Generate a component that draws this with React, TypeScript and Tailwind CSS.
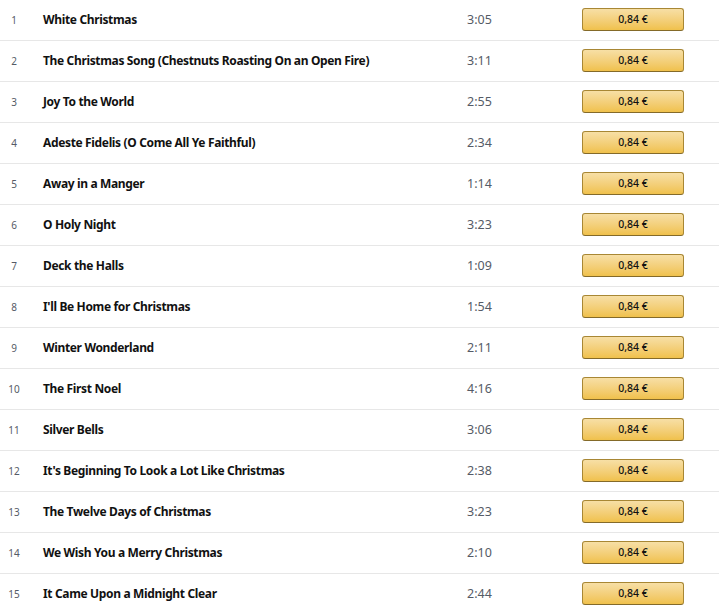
import React from "react";

const tracks: [string, string][] = [
  ["White Christmas", "3:05"],
  ["The Christmas Song (Chestnuts Roasting On an Open Fire)", "3:11"],
  ["Joy To the World", "2:55"],
  ["Adeste Fidelis (O Come All Ye Faithful)", "2:34"],
  ["Away in a Manger", "1:14"],
  ["O Holy Night", "3:23"],
  ["Deck the Halls", "1:09"],
  ["I'll Be Home for Christmas", "1:54"],
  ["Winter Wonderland", "2:11"],
  ["The First Noel", "4:16"],
  ["Silver Bells", "3:06"],
  ["It's Beginning To Look a Lot Like Christmas", "2:38"],
  ["The Twelve Days of Christmas", "3:23"],
  ["We Wish You a Merry Christmas", "2:10"],
  ["It Came Upon a Midnight Clear", "2:44"],
];

export default function App() {
  return (
    <div
      className="w-[719px] h-[609px] overflow-hidden bg-white"
      style={{ fontFamily: '"Noto Sans", "Open Sans", Arial, sans-serif' }}
    >
      {tracks.map(([title, dur], i) => (
        <div
          key={i}
          className="flex items-center h-[41px] border-b border-[#e7e7e7]"
        >
          <div className="w-[28px] text-center text-[10px] text-[#555b66]">
            {i + 1}
          </div>
          <div className="ml-[15px] w-[424px] text-[12px] tracking-[-0.35px] font-bold text-[#111111] whitespace-nowrap">
            {title}
          </div>
          <div className="w-[115px] text-[12.5px] text-[#555b66]">{dur}</div>
          <div className="w-[102px] h-[23px] -mt-[1px] rounded-[3px] border border-[#a88734] border-b-[#846a29] bg-gradient-to-b from-[#f7dfa5] to-[#f0c14b] flex items-center justify-center text-[10.5px] font-medium text-[#111111]">
            0,84 €
          </div>
        </div>
      ))}
    </div>
  );
}
